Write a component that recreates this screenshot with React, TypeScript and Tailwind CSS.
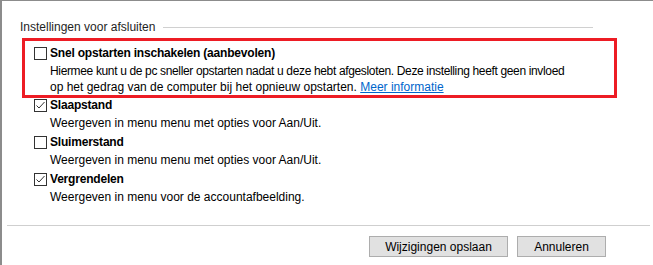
import React from "react";

const FONT = { fontFamily: '"Liberation Sans", Arial, sans-serif' };

function Check({ checked }: { checked?: boolean }) {
  return (
    <span className="flex h-[13px] w-[13px] shrink-0 items-center justify-center border border-[#333333] bg-white">
      {checked && (
        <svg width="11" height="11" viewBox="0 0 11 11">
          <path d="M1.5 5.5 L4 8 L9.5 2" fill="none" stroke="#333" strokeWidth="1" />
        </svg>
      )}
    </span>
  );
}

function Option({
  title,
  checked,
  children,
}: {
  title: string;
  checked?: boolean;
  children: React.ReactNode;
}) {
  return (
    <div className="flex flex-col">
      <div className="flex h-[14px] items-center gap-[3px]">
        <Check checked={checked} />
        <span className="text-[12px] font-bold leading-[14px] tracking-[-0.2px] text-black">{title}</span>
      </div>
      <div className="mt-[3px] pl-[16px] text-[12px] leading-[16px] text-black">{children}</div>
    </div>
  );
}

export default function App() {
  return (
    <div
      className="flex h-[265px] w-[653px] flex-col overflow-hidden border-l-2 border-t border-l-[#8c8c8c] border-t-[#8c8c8c] bg-white"
      style={FONT}
    >
      <div className="flex items-center pl-[18px] pr-[60px] pt-[18px]">
        <span className="text-[12px] leading-[16px] text-[#1e1e1e]">Instellingen voor afsluiten</span>
        <span className="ml-[8px] h-px flex-1 bg-[#d0d0d0]" />
      </div>

      <div className="ml-[20px] mt-[3px] w-[595px] border-[3px] border-[#ed1c24] pl-[9px] pt-[5px]">
        <Option title="Snel opstarten inschakelen (aanbevolen)">
          <span className="tracking-[-0.35px]">
            Hiermee kunt u de pc sneller opstarten nadat u deze hebt afgesloten. Deze instelling heeft geen invloed
          </span>
          <br />
          op het gedrag van de computer bij het opnieuw opstarten.{" "}
          <span className="text-[#0066cc] underline">Meer informatie</span>
        </Option>
      </div>

      <div className="ml-[32px] flex flex-col gap-[4px]">
        <Option title="Slaapstand" checked>
          Weergeven in menu menu met opties voor Aan/Uit.
        </Option>
        <Option title="Sluimerstand">Weergeven in menu menu met opties voor Aan/Uit.</Option>
        <Option title="Vergrendelen" checked>
          Weergeven in menu voor de accountafbeelding.
        </Option>
      </div>

      <div className="ml-[5px] mt-[20px] h-px w-[643px] bg-[#cfcfcf]" />

      <div className="mt-[10px] flex justify-end gap-[9px] pr-[47px]">
        <button className="h-[21px] w-[139px] border border-[#adadad] bg-[#e1e1e1] text-[12px] text-black">
          Wijzigingen opslaan
        </button>
        <button className="h-[21px] w-[89px] border border-[#adadad] bg-[#e1e1e1] text-[12px] text-black">
          Annuleren
        </button>
      </div>
    </div>
  );
}
